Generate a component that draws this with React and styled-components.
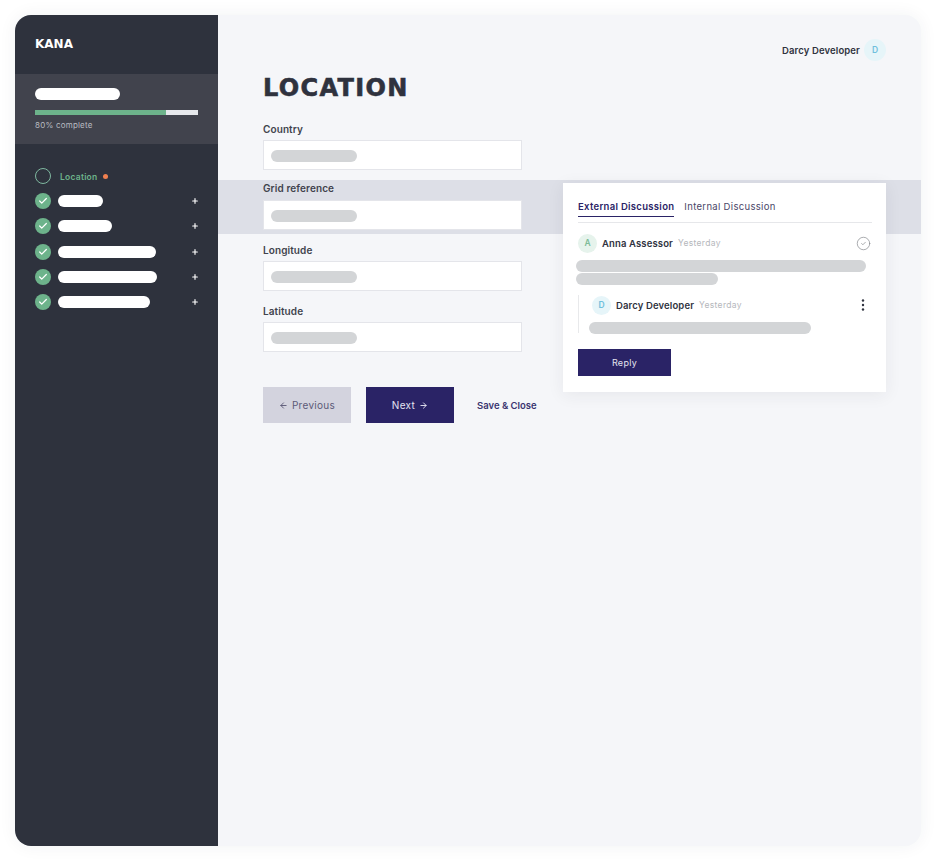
import React from "react";
import styled, { createGlobalStyle } from "styled-components";
import { ArrowLeft, ArrowRight, Check, CircleCheck, Plus } from "lucide-react";

const Global = createGlobalStyle`
  html, body { margin: 0; padding: 0; background: #fff; }
  body { font-family: "Inter", "Liberation Sans", sans-serif; color: #2f323e; }
  * { box-sizing: border-box; }
`;

const Page = styled.div`
  width: 936px;
  height: 861px;
  padding: 15px;
`;

const Card = styled.div`
  position: relative;
  width: 906px;
  height: 831px;
  display: flex;
  border-radius: 16px;
  overflow: hidden;
  background: #f5f6f9;
  box-shadow: 0 0 18px rgba(40, 44, 60, 0.06);
`;

const Sidebar = styled.aside`
  width: 203px;
  flex: none;
  background: #2e323d;
  display: flex;
  flex-direction: column;
`;

const Logo = styled.div`
  height: 59px;
  padding: 22px 20px 0;
  font-family: "DejaVu Sans", sans-serif;
  font-weight: 700;
  font-size: 12px;
  line-height: 14px;
  color: #fff;
`;

const Progress = styled.div`
  height: 70px;
  padding: 14px 20px 0;
  background: #41434d;
`;

const Pill = styled.div`
  height: 12px;
  width: ${(p) => p.$w}px;
  border-radius: 6px;
  background: #fff;
`;

const Track = styled.div`
  margin-top: 10px;
  width: 163px;
  height: 5px;
  background: #e6e8ec;
`;

const Fill = styled.div`
  height: 100%;
  background: #6db38b;
`;

const ProgressText = styled.div`
  margin-top: 5px;
  font-size: 8px;
  line-height: 10px;
  letter-spacing: 0.2px;
  color: #b9bbc1;
`;

const Nav = styled.nav`
  padding: 24px 20px 0;
  display: flex;
  flex-direction: column;
  gap: 9.2px;
`;

const NavRow = styled.div`
  height: 16px;
  display: flex;
  align-items: center;
`;

const RingIcon = styled.span`
  width: 16px;
  height: 16px;
  flex: none;
  border-radius: 50%;
  border: 1.7px solid #7fb8a0;
`;

const DoneIcon = styled.span`
  width: 16px;
  height: 16px;
  flex: none;
  border-radius: 50%;
  background: #6db38b;
  color: #fff;
  display: flex;
  align-items: center;
  justify-content: center;
`;

const ActiveLabel = styled.span`
  margin-left: 9px;
  font-size: 8.5px;
  line-height: 12px;
  padding-top: 1px;
  font-weight: 600;
  letter-spacing: 0.25px;
  color: #6db38b;
`;

const Dot = styled.span`
  margin-left: 5px;
  margin-top: 1px;
  width: 5px;
  height: 5px;
  border-radius: 50%;
  background: #f08050;
`;

const NavPill = styled(Pill)`
  margin-left: 7px;
`;

const PlusMark = styled.span`
  margin-left: auto;
  margin-right: -1px;
  display: flex;
  color: #fff;
`;

const Main = styled.main`
  flex: 1;
  min-width: 0;
  display: flex;
  flex-direction: column;
`;

const TopBar = styled.header`
  padding: 24px 35px 0 0;
  display: flex;
  justify-content: flex-end;
  align-items: center;
  gap: 4px;
`;

const UserName = styled.span`
  font-size: 9.5px;
  font-weight: 600;
  color: #2f323e;
  letter-spacing: 0.13px;
`;

const Avatar = styled.span`
  width: ${(p) => p.$size}px;
  height: ${(p) => p.$size}px;
  flex: none;
  border-radius: 50%;
  display: flex;
  align-items: center;
  justify-content: center;
  font-size: 8.5px;
  font-weight: 600;
  background: ${(p) => (p.$tone === "green" ? "#e6f3ec" : "#e6f5f9")};
  color: ${(p) => (p.$tone === "green" ? "#7dbb98" : "#6fbfdc")};
`;

const Title = styled.h1`
  margin: 12px 0 19px;
  padding: 0 45px;
  font-family: "DejaVu Sans", sans-serif;
  font-size: 24px;
  line-height: 30px;
  font-weight: 700;
  letter-spacing: 1.35px;
  -webkit-text-stroke: 0.6px #2f323e;
  color: #2f323e;
`;

const Field = styled.div`
  margin-top: 13px;
  padding: 0 45px;
  display: flex;
  flex-direction: column;
  gap: 4px;
  &:first-of-type { margin-top: 0; }
`;

const HighlightField = styled(Field)`
  margin-top: 10px;
  padding: 1px 45px 4px;
  gap: 5px;
  background: #dddfe7;
  & + ${Field} { margin-top: 9px; }
`;

const Label = styled.label`
  font-size: 10px;
  line-height: 14px;
  font-weight: 600;
  letter-spacing: 0.1px;
  color: #41434d;
`;

const Input = styled.div`
  width: 259px;
  height: 30px;
  padding: 1px 7px 0;
  display: flex;
  align-items: center;
  background: #fff;
  border: 1px solid #e4e5ea;
`;

const Skeleton = styled.div`
  height: 12px;
  width: ${(p) => p.$w}px;
  border-radius: 6px;
  background: #d3d5d7;
`;

const Actions = styled.div`
  margin-top: 35px;
  padding: 0 45px;
  display: flex;
  align-items: center;
`;

const Button = styled.button`
  width: ${(p) => p.$w || 88}px;
  height: ${(p) => p.$h || 36}px;
  border: 0;
  padding: 0;
  display: flex;
  align-items: center;
  justify-content: center;
  gap: 4px;
  font-family: inherit;
  font-size: ${(p) => p.$fs || 10}px;
  letter-spacing: 0.3px;
  background: ${(p) => (p.$muted ? "#d3d3de" : "#2a2366")};
  color: ${(p) => (p.$muted ? "#5c5a78" : "#e4e3f0")};
`;

const NextButton = styled(Button)`
  margin-left: 15px;
`;

const SaveLink = styled.a`
  margin-left: 23px;
  font-size: 9.5px;
  font-weight: 600;
  color: #3a3470;
`;

const Panel = styled.section`
  position: absolute;
  left: 548px;
  top: 168px;
  width: 323px;
  height: 209px;
  padding: 15px 15px 0 15px;
  background: #fff;
  box-shadow: 0 3px 16px rgba(40, 44, 60, 0.07);
`;

const Tabs = styled.div`
  height: 25px;
  margin-right: -1px;
  display: flex;
  gap: 10px;
  border-bottom: 1px solid #e6e7ea;
`;

const Tab = styled.div`
  height: 19px;
  font-size: 9.5px;
  line-height: 17px;
  letter-spacing: ${(p) => (p.$active ? 0.3 : 0.32)}px;
  font-weight: ${(p) => (p.$active ? 600 : 400)};
  color: ${(p) => (p.$active ? "#2a2366" : "#4a4768")};
  border-bottom: ${(p) => (p.$active ? "1.5px solid #2a2366" : "0")};
`;

const CommentHead = styled.div`
  display: flex;
  align-items: center;
  gap: 5px;
  height: 20px;
`;

const AnnaHead = styled(CommentHead)`
  margin-top: 10px;
`;

const ThreadHead = styled(CommentHead)`
  padding-left: 2px;
  gap: 5px;
`;

const Author = styled.span`
  font-size: 9.5px;
  font-weight: 600;
  color: #2f323e;
  letter-spacing: 0.13px;
`;

const When = styled.span`
  font-size: 8.5px;
  color: #b5b7bc;
  letter-spacing: 0.32px;
`;

const Resolve = styled.span`
  margin-left: auto;
  margin-right: 0;
  display: flex;
  color: #85878c;
`;

const Lines = styled.div`
  margin: 7px 0 0 -2px;
  display: flex;
  flex-direction: column;
  gap: 1px;
`;

const Thread = styled.div`
  margin-top: 10px;
  height: 38px;
  padding-left: 11px;
  border-left: 1px solid #e8e9eb;
`;

const ThreadLines = styled.div`
  margin-top: 7px;
  margin-left: -1px;
`;

const More = styled.span`
  margin-left: auto;
  margin-right: 6px;
  display: flex;
  color: #2f323e;
`;

const ReplyButton = styled(Button)`
  margin-top: 16px;
`;

const pills = [45, 54, 98, 99, 92];

export default function App() {
  return (
    <Page>
      <Global />
      <Card>
        <Sidebar>
          <Logo>KANA</Logo>
          <Progress>
            <Pill $w={85} />
            <Track>
              <Fill style={{ width: "80.5%" }} />
            </Track>
            <ProgressText>80% complete</ProgressText>
          </Progress>
          <Nav>
            <NavRow>
              <RingIcon />
              <ActiveLabel>Location</ActiveLabel>
              <Dot />
            </NavRow>
            {pills.map((w, i) => (
              <NavRow key={i}>
                <DoneIcon>
                  <Check size={10} strokeWidth={3} />
                </DoneIcon>
                <NavPill $w={w} />
                <PlusMark>
                  <Plus size={8} strokeWidth={3.5} />
                </PlusMark>
              </NavRow>
            ))}
          </Nav>
        </Sidebar>
        <Main>
          <TopBar>
            <UserName>Darcy Developer</UserName>
            <Avatar $size={22} $tone="blue">D</Avatar>
          </TopBar>
          <Title>LOCATION</Title>
          <div>
            <Field>
              <Label>Country</Label>
              <Input><Skeleton $w={86} /></Input>
            </Field>
            <HighlightField>
              <Label>Grid reference</Label>
              <Input><Skeleton $w={86} /></Input>
            </HighlightField>
            <Field>
              <Label>Longitude</Label>
              <Input><Skeleton $w={86} /></Input>
            </Field>
            <Field>
              <Label>Latitude</Label>
              <Input><Skeleton $w={86} /></Input>
            </Field>
          </div>
          <Actions>
            <Button $muted>
              <ArrowLeft size={9} strokeWidth={2.5} /> Previous
            </Button>
            <NextButton>
              Next <ArrowRight size={9} strokeWidth={2.5} />
            </NextButton>
            <SaveLink>Save &amp; Close</SaveLink>
          </Actions>
        </Main>
        <Panel>
          <Tabs>
            <Tab $active>External Discussion</Tab>
            <Tab>Internal Discussion</Tab>
          </Tabs>
          <AnnaHead>
            <Avatar $size={19} $tone="green">A</Avatar>
            <Author>Anna Assessor</Author>
            <When>Yesterday</When>
            <Resolve><CircleCheck size={15} strokeWidth={1.1} /></Resolve>
          </AnnaHead>
          <Lines>
            <Skeleton $w={290} />
            <Skeleton $w={142} />
          </Lines>
          <Thread>
            <ThreadHead>
              <Avatar $size={19} $tone="blue">D</Avatar>
              <Author>Darcy Developer</Author>
              <When>Yesterday</When>
              <More>
                <svg width="4" height="12" viewBox="0 0 4 12" fill="currentColor">
                  <circle cx="2" cy="1.5" r="1.2" />
                  <circle cx="2" cy="6" r="1.2" />
                  <circle cx="2" cy="10.5" r="1.2" />
                </svg>
              </More>
            </ThreadHead>
            <ThreadLines>
              <Skeleton $w={222} />
            </ThreadLines>
          </Thread>
          <ReplyButton $w={93} $h={27} $fs={9}>Reply</ReplyButton>
        </Panel>
      </Card>
    </Page>
  );
}
